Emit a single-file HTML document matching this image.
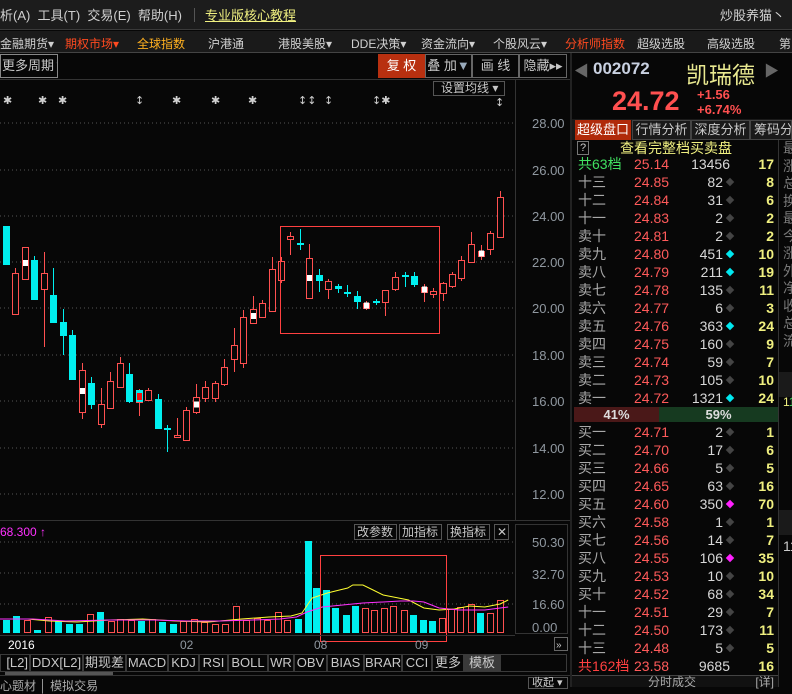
<!DOCTYPE html>
<html><head><meta charset="utf-8"><style>
*{margin:0;padding:0;box-sizing:border-box}
body{width:792px;height:687px;background:#070707;overflow:hidden;position:relative;font-family:"Liberation Sans","Noto Sans CJK SC",sans-serif;color:#c8c8c8;font-size:12px}
.a{position:absolute;white-space:nowrap}
.row{position:absolute;left:572px;width:206px;height:18px;font-size:14px;line-height:18px}
.row .l{position:absolute;left:6px;color:#a8a8a8}
.row .p{position:absolute;left:62px;color:#ff5a5a}
.row .v{position:absolute;right:55px;color:#d8d8d8;text-align:right}
.row .d{position:absolute;left:155px;top:6px;width:6px;height:6px;transform:rotate(45deg);background:#444}
.row .n{position:absolute;right:4px;color:#f0f080;font-weight:bold}
.tab{position:absolute;top:654px;height:18px;border:1px solid #3a3a3a;color:#c8c8c8;font-size:13px;line-height:16px;text-align:center;overflow:hidden;white-space:nowrap}
</style></head><body>
<div class="a" style="left:0;top:0;width:792px;height:30px;background:#1c1c1c;border-bottom:1px solid #3a3a3a"></div>
<div class="a" style="left:0;top:5px;font-size:13px;color:#d0d0d0">析(A)&nbsp;&nbsp;工具(T)&nbsp;&nbsp;交易(E)&nbsp;&nbsp;帮助(H)</div>
<div class="a" style="left:194px;top:8px;width:1px;height:14px;background:#555"></div>
<div class="a" style="left:205px;top:5px;font-size:13px;color:#f0f080;text-decoration:underline">专业版核心教程</div>
<div class="a" style="left:720px;top:5px;font-size:13px;color:#d0d0d0">炒股养猫丶</div>
<div class="a" style="left:0;top:31px;width:792px;height:22px;background:#1a1a1a;border-bottom:1px solid #444"></div>
<div class="a" style="top:35px;left:0;font-size:12px;color:#d0d0d0">金融期货▾</div>
<div class="a" style="top:35px;left:65px;font-size:12px;color:#ff4a20">期权市场▾</div>
<div class="a" style="top:35px;left:137px;font-size:12px;color:#ffb020">全球指数</div>
<div class="a" style="top:35px;left:208px;font-size:12px;color:#d0d0d0">沪港通</div>
<div class="a" style="top:35px;left:278px;font-size:12px;color:#d0d0d0">港股美股▾</div>
<div class="a" style="top:35px;left:351px;font-size:12px;color:#d0d0d0">DDE决策▾</div>
<div class="a" style="top:35px;left:421px;font-size:12px;color:#d0d0d0">资金流向▾</div>
<div class="a" style="top:35px;left:493px;font-size:12px;color:#d0d0d0">个股风云▾</div>
<div class="a" style="top:35px;left:565px;font-size:12px;color:#ff4a20">分析师指数</div>
<div class="a" style="top:35px;left:637px;font-size:12px;color:#d0d0d0">超级选股</div>
<div class="a" style="top:35px;left:707px;font-size:12px;color:#d0d0d0">高级选股</div>
<div class="a" style="top:35px;left:779px;font-size:12px;color:#d0d0d0">第</div>
<div class="a" style="left:0;top:54px;width:58px;height:24px;border:1px solid #888;color:#c8c8c8;font-size:13px;line-height:22px;padding-left:1px;overflow:hidden">更多周期<span style="color:#9ab">▼</span></div>
<div class="a" style="left:0;top:79px;width:572px;height:1px;background:#333"></div>
<div class="a" style="left:378px;top:54px;width:47px;height:24px;background:#b83010;color:#fff;font-size:13px;line-height:24px;text-align:center">复 权</div>
<div class="a" style="left:425px;top:54px;width:47px;height:24px;border:1px solid #666;color:#c8c8c8;font-size:13px;line-height:22px;text-align:center">叠 加<span style="color:#9ab">▼</span></div>
<div class="a" style="left:472px;top:54px;width:47px;height:24px;border:1px solid #666;color:#c8c8c8;font-size:13px;line-height:22px;text-align:center">画 线</div>
<div class="a" style="left:519px;top:54px;width:48px;height:24px;border:1px solid #666;color:#c8c8c8;font-size:13px;line-height:22px;text-align:center">隐藏▸▸</div>
<div class="a" style="left:433px;top:81px;width:72px;height:15px;border:1px solid #555;color:#c8c8c8;font-size:12px;line-height:13px;padding-left:7px">设置均线 ▾</div>

<svg class="a" style="left:0;top:0" width="572" height="687">
<g stroke="#555" stroke-dasharray="1,3">
<line x1="0" y1="123" x2="515" y2="123"/><line x1="0" y1="170" x2="515" y2="170"/><line x1="0" y1="216" x2="515" y2="216"/><line x1="0" y1="262" x2="515" y2="262"/><line x1="0" y1="308" x2="515" y2="308"/><line x1="0" y1="355" x2="515" y2="355"/><line x1="0" y1="401" x2="515" y2="401"/><line x1="0" y1="448" x2="515" y2="448"/><line x1="0" y1="494" x2="515" y2="494"/>
<line x1="0" y1="542" x2="515" y2="542"/><line x1="0" y1="573" x2="515" y2="573"/><line x1="0" y1="604" x2="515" y2="604"/>
</g>
<line x1="515.5" y1="80" x2="515.5" y2="520" stroke="#333"/>
<line x1="0" y1="520.5" x2="572" y2="520.5" stroke="#333"/>
<g fill="#9098a0" font-size="13" font-family="Liberation Sans">
<text x="532" y="128">28.00</text><text x="532" y="175">26.00</text><text x="532" y="221">24.00</text><text x="532" y="267">22.00</text><text x="532" y="313">20.00</text><text x="532" y="360">18.00</text><text x="532" y="406">16.00</text><text x="532" y="453">14.00</text><text x="532" y="499">12.00</text>
</g>
<g fill="#d0d0d0" font-size="11" font-family="DejaVu Sans">
<text x="3" y="104">✱</text><text x="38" y="104">✱</text><text x="58" y="104">✱</text><text x="135" y="104">↕</text><text x="172" y="104">✱</text><text x="211" y="104">✱</text><text x="248" y="104">✱</text><text x="298" y="104">↕↕</text><text x="324" y="104">↕</text><text x="372" y="104">↕✱</text><text x="495" y="106">↕</text>
</g>
<g id="cs"></g>
<rect x="280.5" y="226.5" width="159" height="107" fill="none" stroke="#ff4040"/>
<text x="0" y="536" fill="#ff30ff" font-size="12" font-family="Liberation Sans">68.300 ↑</text>
<rect x="515.5" y="524.5" width="52" height="109" fill="none" stroke="#333"/>
<g fill="#9098a0" font-size="13" font-family="Liberation Sans">
<text x="532" y="547">50.30</text><text x="532" y="579">32.70</text><text x="532" y="609">16.60</text><text x="532" y="632">0.00</text>
</g>
<g id="vs"></g>
<polyline id="ma1" fill="none" stroke="#ffff30" stroke-width="1"/>
<polyline id="ma2" fill="none" stroke="#ff30ff" stroke-width="1"/>
<rect x="320.5" y="555.5" width="126" height="86" fill="none" stroke="#ff4040"/>
<g font-size="12" font-family="Liberation Sans,Noto Sans CJK SC,sans-serif" fill="#c8c8c8">
<rect x="354.5" y="524.5" width="42" height="15" fill="none" stroke="#555"/><text x="357" y="536">改参数</text>
<rect x="399.5" y="524.5" width="42" height="15" fill="none" stroke="#555"/><text x="402" y="536">加指标</text>
<rect x="447.5" y="524.5" width="42" height="15" fill="none" stroke="#555"/><text x="450" y="536">换指标</text>
<rect x="494.5" y="524.5" width="14" height="15" fill="none" stroke="#555"/><text x="497" y="536">✕</text>
</g>
<line x1="0" y1="635.5" x2="515" y2="635.5" stroke="#333"/>
<g fill="#c8c8c8" font-size="12" font-family="Liberation Sans">
<text x="8" y="649" fill="#fff">2016</text><text x="180" y="649" fill="#9098a0">02</text><text x="314" y="649" fill="#9098a0">08</text><text x="415" y="649" fill="#9098a0">09</text>
</g>
<rect x="554.5" y="637.5" width="13" height="13" fill="none" stroke="#666"/><text x="556" y="648" fill="#ccc" font-size="10">»</text>
<line x1="0" y1="675.5" x2="572" y2="675.5" stroke="#333"/>
<rect x="5" y="672" width="108" height="3" fill="#555"/>
</svg>
<div class="tab" style="left:0;width:30px;text-align:right;padding-right:1px">[L2]</div>
<div class="tab" style="left:30px;width:53px">DDX[L2]</div>
<div class="tab" style="left:83px;width:43px">期现差</div>
<div class="tab" style="left:126px;width:42px">MACD</div>
<div class="tab" style="left:168px;width:31px">KDJ</div>
<div class="tab" style="left:199px;width:29px">RSI</div>
<div class="tab" style="left:228px;width:40px">BOLL</div>
<div class="tab" style="left:268px;width:26px">WR</div>
<div class="tab" style="left:294px;width:33px">OBV</div>
<div class="tab" style="left:327px;width:37px">BIAS</div>
<div class="tab" style="left:364px;width:38px">BRAR</div>
<div class="tab" style="left:402px;width:30px">CCI</div>
<div class="tab" style="left:432px;width:32px">更多</div>
<div class="tab" style="left:464px;width:36px;background:#3a3a3a">模板</div>
<div class="tab" style="left:500px;width:67px"></div>
<div class="a" style="left:0;top:677px;font-size:12px;color:#aaa">心题材 │ 模拟交易</div>
<div class="a" style="left:528px;top:677px;width:40px;height:12px;border:1px solid #555;font-size:11px;color:#ccc;line-height:10px;padding-left:3px">收起 ▾</div>

<div class="a" style="left:570px;top:53px;width:2px;height:634px;background:#222"></div>
<div class="a" style="left:574px;top:60px;color:#666;font-size:15px">◀</div>
<div class="a" style="left:593px;top:59px;color:#c8d0e0;font-size:17px;font-weight:bold">002072</div>
<div class="a" style="left:686px;top:56px;color:#e8e890;font-size:23px">凯瑞德</div>
<div class="a" style="left:764px;top:60px;color:#666;font-size:15px">▶</div>
<div class="a" style="left:612px;top:86px;color:#ff5050;font-size:27px;font-weight:bold">24.72</div>
<div class="a" style="left:697px;top:87px;color:#ff5050;font-size:13px;font-weight:bold">+1.56</div>
<div class="a" style="left:697px;top:102px;color:#ff5050;font-size:13px;font-weight:bold">+6.74%</div>
<div class="a" style="left:572px;top:119px;width:220px;height:21px;background:#1a1a1a"></div>
<div class="a" style="left:575px;top:120px;width:56px;height:20px;background:#b02a0a;color:#fff;font-size:13px;line-height:20px;text-align:center">超级盘口</div>
<div class="a" style="left:632px;top:120px;width:59px;height:20px;border:1px solid #444;color:#c8c8c8;font-size:13px;line-height:18px;text-align:center">行情分析</div>
<div class="a" style="left:691px;top:120px;width:59px;height:20px;border:1px solid #444;color:#c8c8c8;font-size:13px;line-height:18px;text-align:center">深度分析</div>
<div class="a" style="left:750px;top:120px;width:42px;height:20px;border:1px solid #444;color:#c8c8c8;font-size:13px;line-height:18px;padding-left:3px;overflow:hidden">筹码分</div>
<div class="a" style="left:577px;top:141px;width:12px;height:14px;border:1px solid #777;color:#ccc;font-size:11px;line-height:12px;text-align:center">?</div>
<div class="a" style="left:620px;top:138px;color:#f0f080;font-size:14px">查看完整档买卖盘</div>
<div class="a" style="left:778px;top:140px;width:1px;height:547px;background:#333"></div>
<div class="a" style="left:783px;top:140px;color:#777;font-size:14px;line-height:17.5px;white-space:normal;width:9px;overflow:hidden;height:230px">最涨总换最今涨外净收总流</div>
<div class="a" style="left:779px;top:372px;width:13px;height:25px;background:#1a1a1a"></div>
<div class="a" style="left:783px;top:393px;font-size:12px;line-height:18px;white-space:normal;width:9px;overflow:hidden"><span style="color:#f0f080">1</span><span style="color:#40e060">1</span><span style="color:#40e060">1</span><span style="color:#ff5050">1</span><span style="color:#f0f080">1</span><span style="color:#ff5050">1</span><span style="color:#ff5050">1</span></div>
<div class="a" style="left:779px;top:510px;width:13px;height:25px;background:#1a1a1a"></div>
<div class="a" style="left:783px;top:537px;font-size:14px;line-height:18px;white-space:normal;width:9px;overflow:hidden;color:#ccc">1111111111111</div>
<div class="a" style="left:574px;top:407px;width:85px;height:15px;background:#4a1818;color:#ddd;font-size:13px;line-height:15px;text-align:center;font-weight:bold">41%</div>
<div class="a" style="left:659px;top:407px;width:119px;height:15px;background:#163a20;color:#ddd;font-size:13px;line-height:15px;text-align:center;font-weight:bold">59%</div>
<div id="ob"></div>
<div class="a" style="left:572px;top:675px;width:206px;height:12px;border-top:1px solid #444;background:#111;color:#aaa;font-size:12px;line-height:12px"><span style="margin-left:76px">分时成交</span><span style="float:right;margin-right:4px">[详]</span></div>
<script>
function M(x){return x<278?x*1.098:305+(x-278)*1.016;}
var C=[[3,226,265,226,265,'c'],[12,273,314,268,315,'r'],[22,247,279,247,279,'w'],[31,260,300,256,300,'c'],[41,273,289,252,347,'r'],[50,295,323,268,323,'c'],[60,322,336,309,355,'c'],[69,335,380,330,380,'c'],[79,370,412,363,419,'w'],[88,383,405,377,409,'c'],[98,404,424,388,428,'r'],[107,381,408,372,408,'r'],[117,363,387,357,388,'r'],[126,374,402,363,403,'c'],[136,390,402,389,416,'q'],[145,390,400,388,400,'r'],[155,399,429,394,429,'c'],[164,428,430,425,452,'x'],[174,435,437,418,438,'r'],[183,410,440,407,440,'r'],[193,397,412,384,414,'w'],[202,387,398,381,402,'r'],[212,383,398,381,402,'r'],[221,367,384,359,386,'r'],[231,345,359,328,372,'r'],[240,317,363,310,368,'r'],[250,309,323,296,323,'w'],[259,303,317,300,317,'r'],[269,269,311,257,311,'r'],[278,261,280,257,283,'r'],[287,236,239,232,255,'r'],[297,243,245,229,250,'x'],[306,258,298,244,298,'w'],[316,275,281,269,292,'c'],[325,281,289,279,299,'r'],[335,286,289,284,293,'c'],[344,292,294,285,297,'x'],[354,296,302,291,309,'c'],[363,303,308,301,310,'w'],[373,301,303,299,305,'x'],[382,290,302,290,316,'r'],[392,277,289,272,291,'r'],[402,275,277,272,287,'x'],[411,276,285,272,287,'c'],[421,287,292,284,302,'w'],[430,291,294,288,298,'r'],[440,283,293,282,301,'r'],[449,274,286,272,288,'r'],[458,260,278,256,281,'r'],[468,244,262,232,263,'r'],[478,251,256,245,260,'w'],[487,233,249,231,255,'r'],[497,197,237,191,238,'r']];
var V=[[3,620,'c'],[12,616,'c'],[22,620,'r'],[31,630,'c'],[41,617,'r'],[50,621,'c'],[60,624,'c'],[69,624,'c'],[79,614,'r'],[88,612,'c'],[98,621,'r'],[107,619,'r'],[117,620,'r'],[126,621,'c'],[136,619,'r'],[145,622,'c'],[155,624,'c'],[164,621,'r'],[174,619,'r'],[183,622,'r'],[193,624,'r'],[202,624,'r'],[212,606,'r'],[221,620,'r'],[231,618,'r'],[240,620,'r'],[250,612,'r'],[259,620,'r'],[269,619,'c'],[278,541,'c'],[286,588,'c'],[296,590,'c'],[305,608,'c'],[315,615,'c'],[324,606,'c'],[334,608,'r'],[343,610,'r'],[353,608,'r'],[362,606,'r'],[372,610,'r'],[381,615,'c'],[391,620,'c'],[400,621,'c'],[410,618,'r'],[419,609,'r'],[428,607,'r'],[438,604,'r'],[447,613,'c'],[457,613,'r'],[467,600,'r']];
var s='';C.forEach(function(c){var x=c[0],cx=x+3.5,t=c[5];var col=(t=='c'||t=='x')?'#00f0f0':'#ff5050';
s+='<line x1="'+cx+'" y1="'+c[3]+'" x2="'+cx+'" y2="'+c[4]+'" stroke="'+col+'"/>';
if(t=='c')s+='<rect x="'+x+'" y="'+c[1]+'" width="7" height="'+(c[2]-c[1])+'" fill="#00f0f0"/>';
else if(t=='x')s+='<rect x="'+x+'" y="'+c[1]+'" width="7" height="2" fill="#00f0f0"/>';
else{s+='<rect x="'+(x+.5)+'" y="'+(c[1]+.5)+'" width="6" height="'+(c[2]-c[1])+'" fill="#070707" stroke="#ff5050"/>';
if(t=='w'){var m=(c[1]+c[2])/2;s+='<rect x="'+(x+1)+'" y="'+(m-3)+'" width="5" height="6" fill="#fff"/>';}
if(t=='q')s+='<rect x="'+x+'" y="'+c[1]+'" width="7" height="'+(c[2]-c[1])+'" fill="#00f0f0"/><rect x="'+(x+1)+'" y="'+(c[1]+3)+'" width="5" height="7" fill="#f01010"/>';}});
document.getElementById('cs').innerHTML=s;
s='';V.forEach(function(v){var h=633-v[1],x=Math.round(M(v[0]));if(v[2]=='c')s+='<rect x="'+x+'" y="'+v[1]+'" width="7" height="'+h+'" fill="#00f0f0"/>';else s+='<rect x="'+(x+.5)+'" y="'+(v[1]+.5)+'" width="6" height="'+(h-1)+'" fill="none" stroke="#ff5050"/>';});
document.getElementById('vs').innerHTML=s;
function P(a){return a.map(function(p){return M(p[0]).toFixed(1)+','+p[1];}).join(' ');}
document.getElementById('ma1').setAttribute('points',P([[0,619],[25,619],[45,621],[70,622],[100,620],[130,619],[160,621],[190,622],[220,619],[245,617],[265,616],[275,613],[285,598],[300,593],[312,590],[320,588],[325,585],[335,585],[345,590],[355,595],[365,597],[380,600],[395,608],[410,610],[425,609],[440,606],[455,607],[470,604],[478,600]]));
document.getElementById('ma2').setAttribute('points',P([[0,619],[30,619],[60,621],[100,620],[140,620],[170,621],[200,621],[230,620],[255,619],[270,617],[280,612],[295,607],[315,605],[335,603],[355,602],[372,601],[385,601],[395,602],[410,608],[430,610],[455,610],[470,608],[478,607]]));
var R=[['共63档','25.14','13456','17',-1,'#40e060'],['十三','24.85','82','8'],['十二','24.84','31','6'],['十一','24.83','2','2'],['卖十','24.81','2','2'],['卖九','24.80','451','10','#00e8f0'],['卖八','24.79','211','19','#00e8f0'],['卖七','24.78','135','11'],['卖六','24.77','6','3'],['卖五','24.76','363','24','#00e8f0'],['卖四','24.75','160','9'],['卖三','24.74','59','7'],['卖二','24.73','105','10'],['卖一','24.72','1321','24','#00e8f0'],
['买一','24.71','2','1'],['买二','24.70','17','6'],['买三','24.66','5','5'],['买四','24.65','63','16'],['买五','24.60','350','70','#ff20ff'],['买六','24.58','1','1'],['买七','24.56','14','7'],['买八','24.55','106','35','#ff20ff'],['买九','24.53','10','10'],['买十','24.52','68','34'],['十一','24.51','29','7'],['十二','24.50','173','11'],['十三','24.48','5','5'],['共162档','23.58','9685','16',-1,'#ff4040']];
s='';R.forEach(function(r,i){var y=i<14?155+i*18:423+(i-14)*18;var lc=r[5]||'';
s+='<div class="row" style="top:'+y+'px"><span class="l"'+(lc?' style="color:'+lc+'"':'')+'>'+r[0]+'</span><span class="p">'+r[1]+'</span><span class="v"'+(r[4]==-1?' style="right:48px"':'')+'>'+r[2]+'</span>'+(r[4]==-1?'':'<span class="d"'+(r[4]?' style="background:'+r[4]+'"':'')+'></span>')+'<span class="n">'+r[3]+'</span></div>';});
document.getElementById('ob').innerHTML=s;
</script>
</body></html>
